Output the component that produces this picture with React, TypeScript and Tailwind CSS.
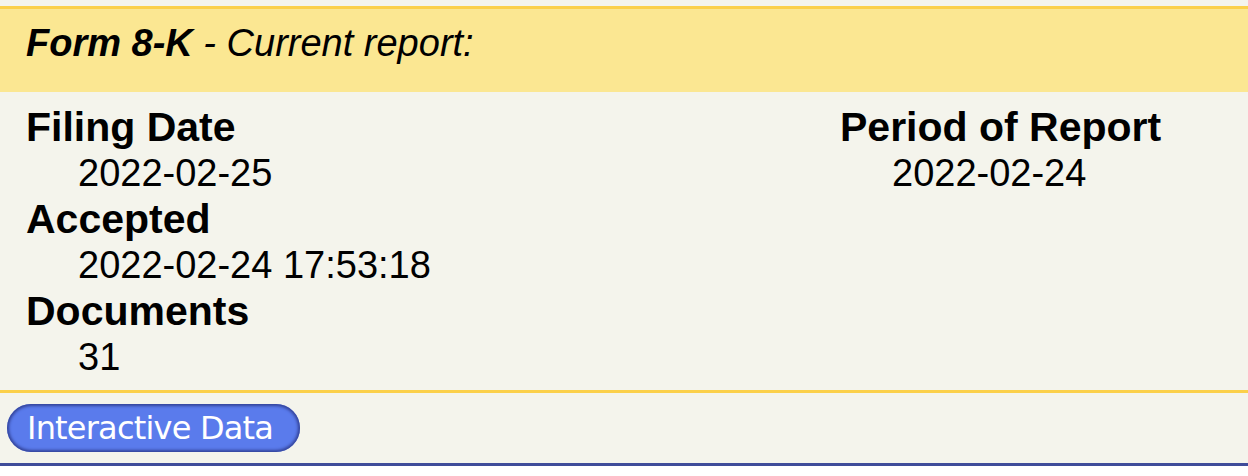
import React from "react";

const Field = ({ label, value }: { label: string; value: string }) => (
  <div>
    <div className="font-bold text-[41px] leading-[46px] text-black">{label}</div>
    <div className="pl-[52px] text-[38px] leading-[46px] text-black">{value}</div>
  </div>
);

export default function App() {
  return (
    <div
      className="w-[1248px] h-[476px] bg-white"
      style={{ fontFamily: '"Liberation Sans", Arial, sans-serif' }}
    >
      <div className="bg-[#f4f4ec] pt-[6px]">
        <div className="border-t-[3px] border-[#fbd04a] bg-[#fbe792] h-[86px] pl-[26px] pt-[14px]">
          <span className="italic text-[38px] leading-[40px] text-black">
            <span className="font-bold">Form 8-K</span> - Current report:
          </span>
        </div>
        <div className="flex pl-[26px] pt-[12px] h-[298px]">
          <div className="w-[814px]">
            <Field label="Filing Date" value="2022-02-25" />
            <Field label="Accepted" value="2022-02-24 17:53:18" />
            <Field label="Documents" value="31" />
          </div>
          <div>
            <Field label="Period of Report" value="2022-02-24" />
          </div>
        </div>
        <div className="border-t-[3px] border-[#fbd04a] border-b-[3px] border-b-[#3f4c9a] pt-[11px] pb-[11px] pl-[7px]">
          <div
            className="inline-flex items-center h-[48px] w-[293px] rounded-full bg-[#5a7bec] pl-[20px] text-white text-[32px] tracking-[-0.8px] shadow-[inset_0_0_3px_2px_#34449a]"
            style={{ fontFamily: '"DejaVu Sans", Verdana, sans-serif' }}
          >
            Interactive Data
          </div>
        </div>
      </div>
    </div>
  );
}
